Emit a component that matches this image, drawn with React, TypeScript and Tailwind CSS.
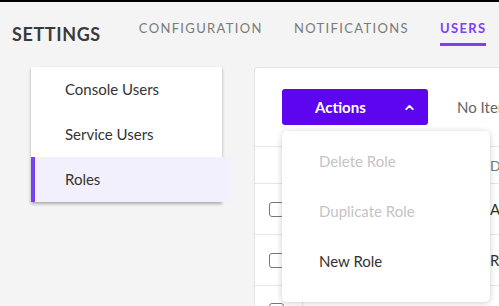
import { ChevronUp } from "lucide-react";

const tabs = ["CONFIGURATION", "NOTIFICATIONS", "USERS"];
const sideItems = ["Console Users", "Service Users", "Roles"];

export default function App() {
  return (
    <div className="relative h-[306px] w-[499px] overflow-hidden bg-[#f4f4f4] font-['Lato',sans-serif] text-[#333]">
      <div className="h-[2px] bg-black" />

      <header className="flex h-[50px] items-start">
        <h1 className="ml-[12px] mt-[21px] text-[18px] font-bold leading-[22px] tracking-[0.6px] text-[#3a3a3a]">SETTINGS</h1>
        <nav className="ml-[38px] flex gap-[31px]">
          {tabs.map((t) => (
            <div key={t} className="flex flex-col">
              <span
                className={`mt-[17px] text-[13px] leading-[18px] tracking-[1.35px] ${
                  t === "USERS" ? "font-bold text-[#8040f0]" : "text-[#7b7a78]"
                }`}
              >
                {t}
              </span>
              {t === "USERS" && <div className="mt-[6px] h-[3px] w-[46px] bg-[#7f3ff0]" />}
            </div>
          ))}
        </nav>
      </header>

      <div className="mt-[15px] flex items-start">
        <aside className="ml-[31px] w-[191px] bg-white shadow-[0_2px_3px_rgba(0,0,0,0.3)]">
          {sideItems.map((s) =>
            s === "Roles" ? (
              <div key={s} className="flex h-[45px] w-[200px] items-center border-l-4 border-[#7b3ff2] bg-[#f3f0fd] pl-[30px] text-[15px]">
                {s}
              </div>
            ) : (
              <div key={s} className="flex h-[45px] items-center pl-[34px] text-[15px]">
                {s}
              </div>
            )
          )}
        </aside>

        <main className="relative ml-[32px] h-[239px] flex-1 rounded-tl-[4px] border-l border-t border-[#e4e4e4] bg-white">
          <div className="flex h-[78px] items-start">
            <button className="ml-[27px] mt-[21px] flex h-[36px] w-[146px] items-center rounded-[3px] bg-[#5c05ee] text-white">
              <span className="ml-[33px] text-[15px] font-bold">Actions</span>
              <ChevronUp className="ml-auto mr-[12px]" size={13} strokeWidth={3.5} />
            </button>
            <span className="ml-[29px] mt-[28px] whitespace-nowrap text-[15px] text-[#666]">No Items Selected</span>
          </div>

          <div className="flex h-[37px] items-center border-t border-[#e6e6e6]">
            <div className="w-[235px]" />
            <span className="whitespace-nowrap text-[14px] text-[#777]">Description</span>
          </div>
          {["Admin role", "Read only role"].map((d) => (
            <div key={d} className="flex h-[51px] items-center border-t border-[#e6e6e6]">
              <div className="ml-[14px] h-[15px] w-[15px] rounded-[3px] border border-[#777]" />
              <div className="w-[206px]" />
              <span className="whitespace-nowrap text-[15px]">{d}</span>
            </div>
          ))}
          <div className="flex h-[51px] items-start border-t border-[#e6e6e6]">
            <div className="ml-[14px] mt-[17px] h-[15px] w-[15px] rounded-[3px] border border-[#777]" />
            <div className="ml-[18px] mt-[2px] h-[49px] w-px bg-[#e6e6e6]" />
            <span className="ml-[10px] mt-[14px] whitespace-nowrap text-[15px]">Cylinder</span>
            <span className="ml-auto mt-[14px] whitespace-nowrap text-[15px]">Cyl</span>
          </div>

          <div className="absolute left-[27px] top-[63px] h-[171px] w-[208px] rounded-[5px] bg-white pt-[5px] shadow-[0_1px_6px_rgba(0,0,0,0.2)]">
            <div className="flex h-[50px] items-center pl-[37px] text-[15px] text-[#c4c4c4]">Delete Role</div>
            <div className="flex h-[50px] items-center pl-[37px] text-[15px] text-[#c4c4c4]">Duplicate Role</div>
            <div className="flex h-[50px] items-center pl-[37px] text-[15px] text-[#333]">New Role</div>
          </div>
        </main>
      </div>
    </div>
  );
}
